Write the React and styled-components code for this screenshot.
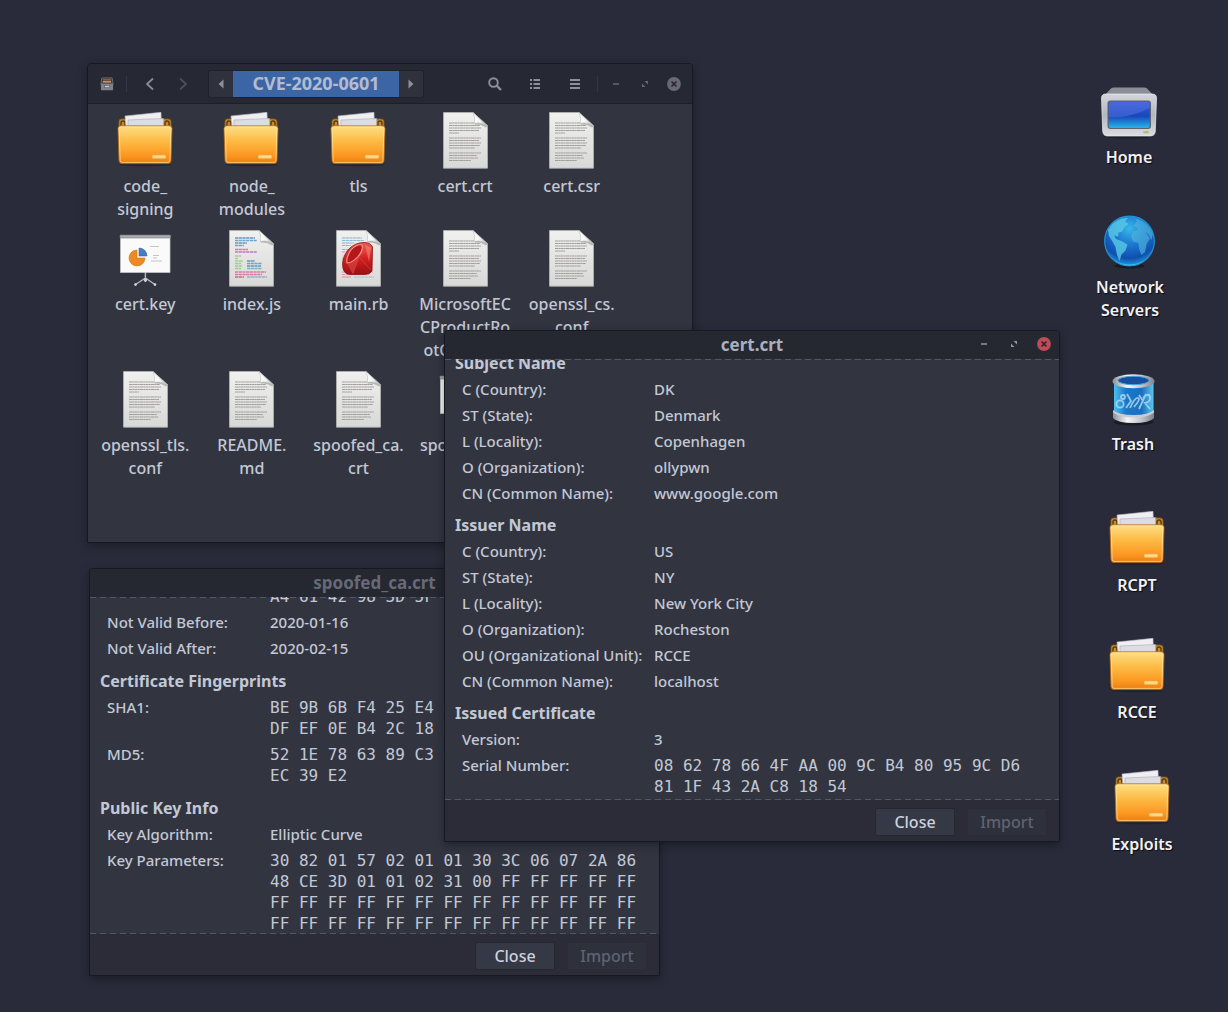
import React from "react";
import styled, { createGlobalStyle, css } from "styled-components";

const uiFont = `"Noto Sans", "Open Sans", "DejaVu Sans", sans-serif`;
const monoFont = `"DejaVu Sans Mono", "Liberation Mono", monospace`;

const GlobalStyle = createGlobalStyle`
  *, *::before, *::after { box-sizing: border-box; }
  body {
    margin: 0;
    background: #2a2b3a;
    color: #c3c8d6;
    font: 500 15px/21px ${uiFont};
  }
  button { font: inherit; color: inherit; }
`;

const Desktop = styled.main`
  position: relative;
  min-height: 100vh;
  overflow: hidden;
  background: #2a2b3a;
`;

/* ---------- windows ---------- */

const Window = styled.section`
  position: absolute;
  left: ${(p) => p.$x}px;
  top: ${(p) => p.$y}px;
  width: ${(p) => p.$w}px;
  height: ${(p) => p.$h}px;
  display: flex;
  flex-direction: column;
  border: 1px solid #171922;
  border-radius: 4px 4px 0 0;
  background: #323540;
  box-shadow: 0 3px 8px rgba(12, 13, 20, 0.45);
  overflow: hidden;
`;

const TitleBar = styled.header`
  display: grid;
  grid-template-columns: 1fr auto 1fr;
  align-items: center;
  height: 28px;
  flex: none;
  padding-bottom: 2px;
  background: #252731;
`;

const Title = styled.h1`
  grid-column: 2;
  margin: 0;
  font-size: 17px;
  font-weight: 700;
  color: ${(p) => (p.$dim ? "#666a76" : "#aab0bd")};
`;

const WindowControls = styled.div`
  display: flex;
  justify-content: flex-end;
  gap: ${(p) => p.$gap}px;
  padding: 0 ${(p) => p.$end}px 0 10px;
`;

const IconButton = styled.button`
  display: grid;
  place-items: center;
  width: 16px;
  height: 16px;
  padding: 0;
  border: 0;
  background: none;
  color: ${(p) => p.$tone || "#8b909c"};
`;

/* ---------- file manager ---------- */

const Toolbar = styled.header`
  display: flex;
  align-items: center;
  height: 40px;
  flex: none;
  padding: 0 10px 0 12px;
  background: #262934;
  border-bottom: 1px solid #1d1f28;
`;

const NavGroup = styled.div`
  display: flex;
  align-items: center;
  gap: 17px;
  padding: 0 17px 0 15px;
`;

const ActionGroup = styled.div`
  display: flex;
  align-items: center;
  gap: 24px;
  margin-left: auto;
  padding-right: 14px;
`;

const Divider = styled.span`
  width: 1px;
  height: 16px;
  background: #353844;
  margin-left: ${(p) => p.$before || 0}px;
`;

const PathBar = styled.nav`
  display: flex;
  height: 28px;
  border: 1px solid #20222b;
  border-radius: 2px;
  background: #2f323d;
`;

const PathArrow = styled.button`
  display: grid;
  place-items: center;
  width: 24px;
  padding: 0;
  border: 0;
  background: none;
  color: #8b909c;
`;

const PathCurrent = styled.button`
  width: 166px;
  padding: 0;
  border: 0;
  background: #3c65a6;
  color: #b3bccf;
  font-size: 18px;
  font-weight: 700;
`;

const FileGrid = styled.ul`
  display: grid;
  grid-template-columns: repeat(5, 1fr);
  row-gap: 9px;
  margin: 0;
  padding: 8px 67px 0 4px;
  list-style: none;
`;

const itemColumn = css`
  display: flex;
  flex-direction: column;
  align-items: center;
  gap: 6px;
  line-height: 23px;
  text-align: center;
`;

const FileItem = styled.li`
  ${itemColumn}
  font-size: 16px;
  white-space: nowrap;
`;

const Line = styled.span`
  display: block;
`;

const Art = styled.svg`
  display: block;
  width: 57px;
  height: 57px;
`;

/* ---------- desktop shortcuts ---------- */

const Shortcut = styled.a`
  ${itemColumn}
  position: absolute;
  left: ${(p) => p.$x}px;
  top: ${(p) => p.$y}px;
  width: 96px;
  color: #f1f2f5;
  font-size: 16px;
  font-weight: 600;
  text-decoration: none;
  text-shadow: 1px 1px 1px rgba(0, 0, 0, 0.8);
`;

/* ---------- certificate viewer ---------- */

const dashes = "repeating-linear-gradient(90deg, #545863 0 6px, transparent 6px 10px)";

const Viewport = styled.div`
  flex: 1;
  min-height: 0;
  display: flex;
  flex-direction: column;
  justify-content: flex-end;
  gap: ${(p) => p.$gap}px;
  overflow: hidden;
  padding: 0 11px ${(p) => p.$end}px 10px;
  background: ${dashes} top / 100% 1px no-repeat, ${dashes} bottom / 100% 1px no-repeat;
`;

const Group = styled.section`
  flex: none;
  display: flex;
  flex-direction: column;
  gap: 5px;
`;

const GroupTitle = styled.h2`
  margin: 0;
  font-size: 16px;
  line-height: 21px;
  font-weight: 700;
`;

const Fields = styled.dl`
  display: grid;
  grid-template-columns: ${(p) => p.$label}px 1fr;
  row-gap: 5px;
  margin: 0;
  padding-left: 7px;
  white-space: nowrap;
`;

const Term = styled.dt`
  grid-column: 1;
`;

const Value = styled.dd`
  grid-column: 2;
  margin: 0;
  ${(p) =>
    p.$mono &&
    css`
      font-family: ${monoFont};
      font-size: 16px;
      font-weight: 400;
    `}
`;

const Footer = styled.footer`
  display: flex;
  justify-content: flex-end;
  align-items: center;
  gap: 12px;
  height: 41px;
  flex: none;
  padding: 2px 12px 0 0;
  background: #2b2c38;
`;

const Button = styled.button`
  width: 80px;
  height: 28px;
  padding: 2px 0 0;
  border: 1px solid #242630;
  border-radius: 2px;
  background: #353845;
  font-size: 16px;
  color: #ccd1de;

  &:disabled {
    background: #2e303c;
    border-color: #292b36;
    color: #5f6371;
  }
`;

/* ---------- drawings ---------- */

const Gradient = ({ id, stops, flat }) => (
  <linearGradient id={id} x1="0" y1="0" x2={flat ? 1 : 0} y2={flat ? 0 : 1}>
    {stops.map(([at, color]) => (
      <stop key={at} offset={at} stopColor={color} />
    ))}
  </linearGradient>
);

const SharedDefs = () => (
  <svg width="0" height="0" style={{ position: "absolute" }} aria-hidden="true">
    <defs>
      <Gradient id="folder" stops={[[0, "#fddf86"], [0.4, "#fdbb45"], [0.8, "#fb9620"], [1, "#e87d12"]]} />
      <Gradient id="paper" stops={[[0, "#f0f0ee"], [1, "#d8d8d6"]]} />
      <Gradient id="curl" flat stops={[[0, "#ffffff"], [0.5, "#f4f4f4"], [1, "#b5b5b5"]]} />
      <Gradient id="case" stops={[[0, "#d4d5dc"], [0.5, "#b4b6bf"], [1, "#dcdde2"]]} />
      <Gradient id="screen" stops={[[0, "#3c5dd6"], [0.55, "#1747bb"], [1, "#27b4e8"]]} />
      <Gradient id="glass" flat stops={[[0, "#4cc0ee"], [0.3, "#1a78c8"], [0.7, "#1c6fc0"], [1, "#58c8f0"]]} />
      <Gradient id="metal" flat stops={[[0, "#8c9098"], [0.35, "#f4f5f7"], [0.7, "#c0c3ca"], [1, "#7d8189"]]} />
      <Gradient id="gem" stops={[[0, "#ef5a50"], [0.5, "#cf2020"], [1, "#9c0f12"]]} />
      <radialGradient id="ocean" cx="0.5" cy="0.25" r="0.8">
        <stop offset="0" stopColor="#36b8ea" />
        <stop offset="0.4" stopColor="#1d78d0" />
        <stop offset="0.75" stopColor="#0f4fae" />
        <stop offset="1" stopColor="#27b7ef" />
      </radialGradient>
    </defs>
  </svg>
);

const FolderArt = () => (
  <Art viewBox="0 0 57 57" aria-hidden="true">
    <ellipse cx="28.5" cy="52.5" rx="26" ry="1.8" fill="#15161d" opacity="0.45" />
    <path d="M2 17V9.500Q2 7 4.500 7H51Q54 7 54 9.500V17Z" fill="#c58a2c" stroke="#8a5a18" strokeWidth="0.8" />
    <path d="M4 14V11Q4 9 6 9T8 11V14M48 14V11Q48 9 50 9T52 11V14" fill="none" stroke="#5c3a12" strokeWidth="1.4" />
    <path d="M8 4L44 0.300L44.500 15H9Z" fill="#eeeef3" stroke="#b9b9c0" strokeWidth="0.6" />
    <path d="M11 8L46.500 6.500V15H11Z" fill="#dcdce2" stroke="#a9a9b0" strokeWidth="0.6" />
    <path d="M1 16.500Q1 13.800 4 13.800H52Q55 13.800 55 16.500L54 48.500Q54 51.600 51 51.600H5Q2.200 51.600 2 48.500Z" fill="url(#folder)" stroke="#b06a1c" strokeWidth="0.8" />
    <path d="M2.200 17Q2.200 15 4.200 15H51.800Q53.800 15 53.800 17L52.900 48.300Q52.800 50.400 50.800 50.400H5.200Q3.300 50.400 3.200 48.300Z" fill="none" stroke="#ffe9a6" strokeWidth="0.8" opacity="0.8" />
    <rect x="35" y="43" width="14" height="3.4" rx="1.5" fill="#ffd98c" stroke="#f3a948" strokeWidth="0.6" />
  </Art>
);

const textLines = [
  [11, 25], [13.5, 31], [16, 32], [18.5, 30], [21, 10],
  [26, 32], [28.5, 30], [31, 32], [33.5, 31], [36, 26],
  [41, 32], [43.5, 28], [46, 29], [48.5, 22],
];

const codeLines = [
  [12, 8, 20, "#4d86c0"], [12, 10.5, 22, "#5b9bc0"], [12, 13, 12, "#4d86c0"], [12, 15.5, 9, "#5b9bc0"],
  [12, 19.5, 13, "#d8619d"], [12, 22, 22, "#b568b8"],
  [12, 26, 6, "#8ccf7c"], [12, 28.5, 3, "#8ccf7c"], [12, 31, 8, "#8ccf7c"], [24, 31, 8, "#4d86c0"],
  [12, 33.5, 6, "#8ccf7c"], [24, 33.5, 15, "#5b9bc0"], [12, 36, 7, "#8ccf7c"], [24, 36, 14, "#4d86c0"],
  [12, 38.5, 6, "#8ccf7c"], [24, 38.5, 15, "#6fa8c8"],
  [12, 42, 31, "#dd6a9c"], [12, 44.5, 27, "#d36aa4"], [12, 47, 9, "#d8505c"], [24, 47, 20, "#8fa6c8"],
];

const Sheet = ({ children }) => (
  <Art viewBox="0 0 57 57" aria-hidden="true">
    <path d="M6.500 0.500H36L50.500 13.500V56.200H6.500Z" fill="url(#paper)" stroke="#b4b4b2" strokeWidth="0.8" />
    {children}
    <path d="M36 0.500Q38.500 6 37.500 11.500Q44 9.500 50.500 14.500Z" fill="url(#curl)" stroke="#b0b0ae" strokeWidth="0.5" />
    <path d="M37.500 11.500Q44 9.500 50.500 14.500L49 15.500Q43 11.500 38 12.700Z" fill="#8e8e8c" opacity="0.55" />
  </Art>
);

const DocumentArt = () => (
  <Sheet>
    {textLines.map(([y, w]) => (
      <path key={y} d={`M12 ${y}h${w}`} stroke="#a09f9d" strokeWidth="1.2" strokeDasharray="3.2 0.3 1.7 0.3" />
    ))}
  </Sheet>
);

const ScriptArt = () => (
  <Sheet>
    {codeLines.map(([x, y, w, color]) => (
      <path key={`${x}-${y}`} d={`M${x} ${y}h${w}`} stroke={color} strokeWidth="1.3" strokeDasharray="3.2 0.5" opacity="0.85" />
    ))}
  </Sheet>
);

const RubyArt = () => (
  <Sheet>
    {codeLines.map(([x, y, w, color]) => (
      <path key={`${x}-${y}`} d={`M${x} ${y}h${w}`} stroke={color} strokeWidth="1.2" strokeDasharray="3.2 0.5" opacity="0.6" />
    ))}
    <path d="M13 38Q11 29 18 20Q25 12 35 12.500Q41 13 42.500 17L42 41Q40 44.500 34 44.500H20Q14 44 13 38Z" fill="url(#gem)" stroke="#8a1214" strokeWidth="0.8" />
    <path d="M29 27L34 15.500L41.500 18.500M29 27L41 40M29 27L18 34L23 43.500Z" fill="#e4483f" stroke="#e8645a" strokeWidth="0.7" opacity="0.6" />
    <path d="M17 33Q16 27 21 20Q27 13.500 32 15Q33.500 20 28 26.500Q22 33 17 33Z" fill="#b5181b" stroke="#f29a92" strokeWidth="1.1" />
    <path d="M35 15L41 17.500L39 32Z" fill="#f3847b" opacity="0.6" />
  </Sheet>
);

const SlidesArt = () => (
  <Art viewBox="0 0 57 57" aria-hidden="true">
    <path d="M28.400 42V49M28.400 48L18.500 54.500M28.400 48L38 54.500M28.400 48V52" stroke="#b7babf" strokeWidth="1.4" fill="none" />
    <circle cx="28.4" cy="50" r="1.7" fill="#cfd1d5" />
    <circle cx="18.5" cy="54.6" r="1.3" fill="#dcdde0" />
    <circle cx="38" cy="54.6" r="1.3" fill="#dcdde0" />
    <rect x="3.5" y="7" width="49.5" height="35.5" fill="#fafafa" stroke="#c9c9c9" strokeWidth="0.7" />
    <rect x="3" y="5" width="50.6" height="3" rx="0.6" fill="#a9abae" stroke="#77797c" strokeWidth="0.6" />
    <path d="M20 28V20A8 8 0 1 0 28 28Z" fill="#ee8a22" stroke="#c9690f" strokeWidth="0.5" />
    <path d="M22 26V18A8 8 0 0 1 30 26Z" fill="#4a7cc4" stroke="#2f5a9c" strokeWidth="0.5" />
    <path d="M33 16.500h9M36 25.500h6M36 28h4M34 31h11" stroke="#b6b6b6" strokeWidth="0.8" />
  </Art>
);

const MonitorArt = () => (
  <Art viewBox="0 0 57 57" aria-hidden="true">
    <ellipse cx="28" cy="53.3" rx="25" ry="2" fill="#12131a" opacity="0.6" />
    <path d="M1 15L10 5.500Q11 4.500 13 4.500H43Q45 4.500 46 5.500L55 15Z" fill="#8b8d97" />
    <path d="M0.500 15Q0.500 11 5 11H51Q55.500 11 55.500 15L54.300 48Q54 53 49.500 53H6.500Q2 53 1.700 48Z" fill="url(#case)" stroke="#eceef2" strokeWidth="0.7" />
    <rect x="6.5" y="17.5" width="43.5" height="28.5" rx="3" fill="#5e6270" />
    <rect x="7.7" y="18.7" width="41" height="26.2" rx="2" fill="url(#screen)" />
    <path d="M8 34Q26 36 48.700 25V21Q48.700 18.700 46.500 18.700H10Q8 18.700 8 21Z" fill="#5b7be8" opacity="0.45" />
    <path d="M43 49.300h4" stroke="#a9bf5c" strokeWidth="2" strokeLinecap="round" />
  </Art>
);

const GlobeArt = () => (
  <Art viewBox="0 0 57 57" aria-hidden="true">
    <ellipse cx="27.5" cy="53" rx="15" ry="2.4" fill="#0e0f16" opacity="0.6" />
    <circle cx="27.5" cy="28" r="24.8" fill="url(#ocean)" stroke="#1e93d6" strokeWidth="1.2" />
    <path d="M6 17Q11 8 20 5.500L26 5L23 8.500L26.500 11L22.500 14L20 18.500L16.500 19.500L16 23.500L12 22.500L14 26L20.500 28.500L25.500 31.500L23.500 37.500L19.500 41.500L17.500 48L15 42L13.500 34L10.500 28.500L7 23Z" fill="#59cbe6" opacity="0.8" />
    <path d="M31.500 13L35 8L33 5.500Q42 7 48 15L51 21L49.500 27L46 21L43.500 19L48 25.500L44.500 31L43 39L39.500 42L37 36L36.500 30L31 28.500L29 23.500L31 18.500L36 17L34 14Z" fill="#4fb4dc" opacity="0.65" />
    <path d="M12 47Q27 56 43 47Q36 52.400 27.500 52.400Q18 52 12 47Z" fill="#3cd3fa" opacity="0.8" />
  </Art>
);

const TrashArt = () => (
  <Art viewBox="0 0 57 57" aria-hidden="true">
    <ellipse cx="28.5" cy="52" rx="20" ry="3.5" fill="#101118" opacity="0.6" />
    <path d="M8 42V48Q12 53 28.500 53T49 48V42Z" fill="url(#metal)" />
    <path d="M9 11H48.500V41Q44 45.500 28.500 45.500T9 41Z" fill="url(#glass)" />
    <path d="M8 40Q13 45 28.500 45T49 40V42.500Q43 47.500 28.500 47.500T8 42.500Z" fill="#c9ccd3" />
    <g fill="none" stroke="#b4dcf4" strokeWidth="1.8" opacity="0.8">
      <circle cx="15" cy="34" r="3.6" />
      <circle cx="18" cy="27" r="2" />
      <path d="M22 24L26 31L21 38M25 38Q30 27 33 28T29 37M34 25L38 31M34 39L41 24M38 28Q44 22 45 27T40 33L45 39" />
    </g>
    <ellipse cx="28.5" cy="11.3" rx="21" ry="7" fill="url(#metal)" />
    <ellipse cx="28.5" cy="10.5" rx="15.5" ry="4.2" fill="#174f9c" stroke="#4aa4dc" strokeWidth="1" />
  </Art>
);

const CabinetGlyph = () => (
  <svg width="14" height="14" viewBox="0 0 15 15" aria-hidden="true">
    <path d="M2 1H13L14 8H1Z" fill="#3c3230" stroke="#7d7f84" strokeWidth="0.8" />
    <path d="M3 3H12" stroke="#b8603c" strokeWidth="1.4" />
    <path d="M3 5.200H12" stroke="#d8b890" strokeWidth="1.2" />
    <rect x="1" y="7" width="13" height="7.3" rx="0.8" fill="#7f8287" />
    <rect x="5" y="9" width="5" height="2.4" fill="#c6c8cb" stroke="#55585e" strokeWidth="0.6" />
  </svg>
);

const Chevron = ({ flip }) => (
  <svg width="10" height="14" viewBox="0 0 10 14" aria-hidden="true">
    <path d={flip ? "M2 1.500L8 7L2 12.500" : "M8 1.500L2 7L8 12.500"} fill="none" stroke="currentColor" strokeWidth="1.7" />
  </svg>
);

const Triangle = ({ flip }) => (
  <svg width="6" height="10" viewBox="0 0 6 10" aria-hidden="true">
    <path d={flip ? "M0.500 0.500L5.500 5L0.500 9.500Z" : "M5.500 0.500L0.500 5L5.500 9.500Z"} fill="currentColor" />
  </svg>
);

const SearchGlyph = () => (
  <svg width="14" height="14" viewBox="0 0 14 14" aria-hidden="true">
    <circle cx="5.5" cy="5.5" r="4.3" fill="none" stroke="currentColor" strokeWidth="1.9" />
    <path d="M8.800 8.800L13 13" stroke="currentColor" strokeWidth="2.3" />
  </svg>
);

const ListGlyph = () => (
  <svg width="12" height="12" viewBox="0 0 12 12" aria-hidden="true">
    <path d="M1 2h2M1 6h2M1 10h2M4.500 2h6.500M4.500 6h6.500M4.500 10h6.500" stroke="currentColor" strokeWidth="2" />
  </svg>
);

const MenuGlyph = () => (
  <svg width="12" height="12" viewBox="0 0 12 12" aria-hidden="true">
    <path d="M1 2h10M1 6h10M1 10h10" stroke="currentColor" strokeWidth="2.2" />
  </svg>
);

const MinimizeGlyph = () => (
  <svg width="16" height="16" viewBox="0 0 16 16" aria-hidden="true">
    <path d="M5 8h6" stroke="currentColor" strokeWidth="1.7" />
  </svg>
);

const RestoreGlyph = () => (
  <svg width="16" height="16" viewBox="0 0 16 16" aria-hidden="true">
    <path d="M7.500 5H11V8.500ZM5 7.500L8.500 11H5Z" fill="currentColor" />
  </svg>
);

const CloseGlyph = ({ cross }) => (
  <svg width="16" height="16" viewBox="0 0 16 16" aria-hidden="true">
    <circle cx="8" cy="8" r="6.9" fill="currentColor" />
    <path d="M5.500 5.500L10.500 10.500M10.500 5.500L5.500 10.500" stroke={cross} strokeWidth="1.7" />
  </svg>
);

const Controls = ({ gap, end, tone, closeTone }) => (
  <WindowControls $gap={gap} $end={end}>
    <IconButton $tone={tone} aria-label="Minimize"><MinimizeGlyph /></IconButton>
    <IconButton $tone={tone} aria-label="Restore"><RestoreGlyph /></IconButton>
    <IconButton $tone={closeTone} aria-label="Close window"><CloseGlyph cross="#30232c" /></IconButton>
  </WindowControls>
);

/* ---------- data ---------- */

const files = [
  [FolderArt, "code_", "signing"],
  [FolderArt, "node_", "modules"],
  [FolderArt, "tls"],
  [DocumentArt, "cert.crt"],
  [DocumentArt, "cert.csr"],
  [SlidesArt, "cert.key"],
  [ScriptArt, "index.js"],
  [RubyArt, "main.rb"],
  [DocumentArt, "MicrosoftEC", "CProductRo", "otCertific…"],
  [DocumentArt, "openssl_cs.", "conf"],
  [DocumentArt, "openssl_tls.", "conf"],
  [DocumentArt, "README.", "md"],
  [DocumentArt, "spoofed_ca.", "crt"],
  [SlidesArt, "spoofed_ca.", "key"],
];

const shortcuts = [
  [1081, 83, MonitorArt, "Home"],
  [1082, 213, GlobeArt, "Network", "Servers"],
  [1085, 370, TrashArt, "Trash"],
  [1089, 511, FolderArt, "RCPT"],
  [1089, 638, FolderArt, "RCCE"],
  [1094, 770, FolderArt, "Exploits"],
];

const spoofedCert = [
  {
    fields: [
      { value: ["A4 61 42 98 3D 5F 7A"], mono: true },
      { label: "Not Valid Before:", value: ["2020-01-16"] },
      { label: "Not Valid After:", value: ["2020-02-15"] },
    ],
  },
  {
    title: "Certificate Fingerprints",
    fields: [
      { label: "SHA1:", value: ["BE 9B 6B F4 25 E4 C5", "DF EF 0E B4 2C 18 DB"], mono: true },
      { label: "MD5:", value: ["52 1E 78 63 89 C3 0E", "EC 39 E2"], mono: true },
    ],
  },
  {
    title: "Public Key Info",
    fields: [
      { label: "Key Algorithm:", value: ["Elliptic Curve"] },
      {
        label: "Key Parameters:",
        mono: true,
        value: [
          "30 82 01 57 02 01 01 30 3C 06 07 2A 86",
          "48 CE 3D 01 01 02 31 00 FF FF FF FF FF",
          "FF FF FF FF FF FF FF FF FF FF FF FF FF",
          "FF FF FF FF FF FF FF FF FF FF FF FF FF",
        ],
      },
    ],
  },
];

const siteCert = [
  {
    title: "Subject Name",
    fields: [
      { label: "C (Country):", value: ["DK"] },
      { label: "ST (State):", value: ["Denmark"] },
      { label: "L (Locality):", value: ["Copenhagen"] },
      { label: "O (Organization):", value: ["ollypwn"] },
      { label: "CN (Common Name):", value: ["www.google.com"] },
    ],
  },
  {
    title: "Issuer Name",
    fields: [
      { label: "C (Country):", value: ["US"] },
      { label: "ST (State):", value: ["NY"] },
      { label: "L (Locality):", value: ["New York City"] },
      { label: "O (Organization):", value: ["Rocheston"] },
      { label: "OU (Organizational Unit):", value: ["RCCE"] },
      { label: "CN (Common Name):", value: ["localhost"] },
    ],
  },
  {
    title: "Issued Certificate",
    fields: [
      { label: "Version:", value: ["3"] },
      {
        label: "Serial Number:",
        mono: true,
        value: ["08 62 78 66 4F AA 00 9C B4 80 95 9C D6", "81 1F 43 2A C8 18 54"],
      },
    ],
  },
];

const Lines = ({ of }) => of.map((text, i) => <Line key={i}>{text}</Line>);

const CertViewer = ({ box, title, dim, groups, labelWidth, gap = 12, end = 0, controls }) => (
  <Window $x={box[0]} $y={box[1]} $w={box[2]} $h={box[3]} aria-label={title}>
    <TitleBar>
      <Title $dim={dim}>{title}</Title>
      {controls}
    </TitleBar>
    <Viewport $gap={gap} $end={end}>
      {groups.map((group, i) => (
        <Group key={i}>
          {group.title && <GroupTitle>{group.title}</GroupTitle>}
          <Fields $label={labelWidth}>
            {group.fields.map((field, j) => (
              <React.Fragment key={j}>
                {field.label && <Term>{field.label}</Term>}
                <Value $mono={field.mono}><Lines of={field.value} /></Value>
              </React.Fragment>
            ))}
          </Fields>
        </Group>
      ))}
    </Viewport>
    <Footer>
      <Button>Close</Button>
      <Button disabled>Import</Button>
    </Footer>
  </Window>
);

export default function App() {
  return (
    <Desktop>
      <GlobalStyle />
      <SharedDefs />

      {shortcuts.map(([x, y, Picture, ...label]) => (
        <Shortcut key={label[0]} href="#" $x={x} $y={y}>
          <Picture />
          <span><Lines of={label} /></span>
        </Shortcut>
      ))}

      <Window $x={87} $y={63} $w={606} $h={480} aria-label="Files">
        <Toolbar>
          <CabinetGlyph />
          <Divider $before={12} />
          <NavGroup>
            <IconButton aria-label="Back"><Chevron /></IconButton>
            <IconButton $tone="#4c505c" aria-label="Forward"><Chevron flip /></IconButton>
          </NavGroup>
          <PathBar aria-label="Path">
            <PathArrow aria-label="Previous folders"><Triangle /></PathArrow>
            <PathCurrent>CVE-2020-0601</PathCurrent>
            <PathArrow aria-label="Next folders"><Triangle flip /></PathArrow>
          </PathBar>
          <ActionGroup>
            <IconButton aria-label="Search"><SearchGlyph /></IconButton>
            <IconButton aria-label="View as list"><ListGlyph /></IconButton>
            <IconButton aria-label="Menu"><MenuGlyph /></IconButton>
          </ActionGroup>
          <Divider />
          <Controls gap={13} end={0} tone="#646874" closeTone="#666a75" />
        </Toolbar>
        <FileGrid>
          {files.map(([Picture, ...label], i) => (
            <FileItem key={i}>
              <Picture />
              <span><Lines of={label} /></span>
            </FileItem>
          ))}
        </FileGrid>
      </Window>

      <CertViewer
        box={[89, 568, 571, 408]}
        title="spoofed_ca.crt"
        dim
        groups={spoofedCert}
        labelWidth={163}
      />

      <CertViewer
        box={[444, 330, 616, 512]}
        title="cert.crt"
        groups={siteCert}
        labelWidth={192}
        gap={11}
        end={3}
        controls={<Controls gap={14} end={7} tone="#8f95a1" closeTone="#bf4c57" />}
      />
    </Desktop>
  );
}
